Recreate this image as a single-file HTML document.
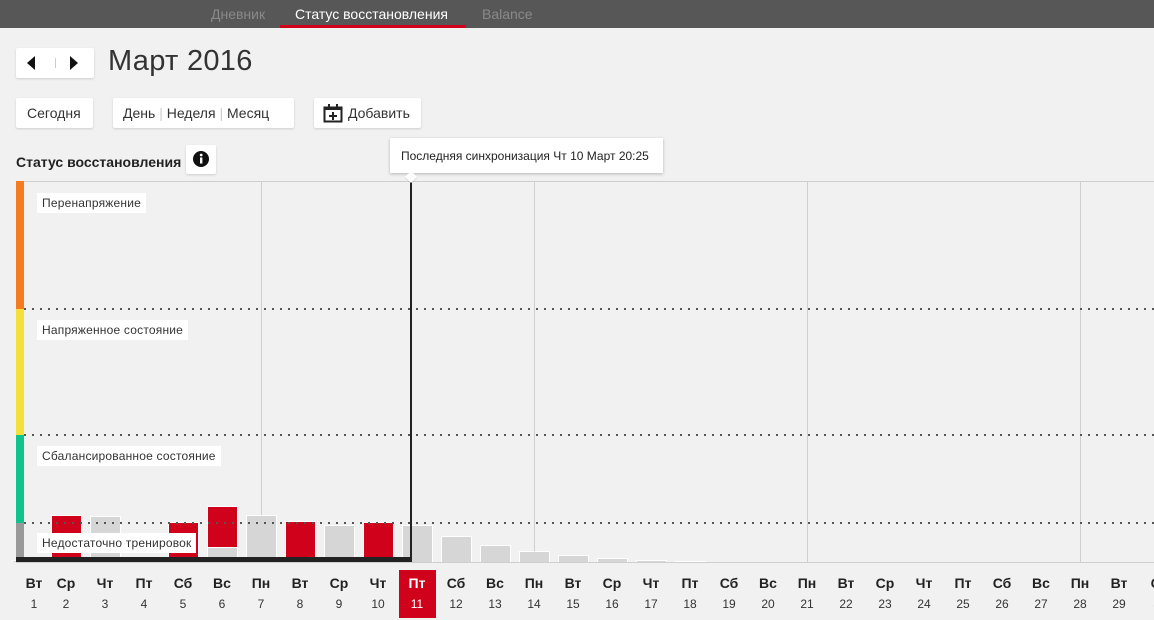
<!DOCTYPE html>
<html><head><meta charset="utf-8"><style>
*{margin:0;padding:0;box-sizing:border-box}
body{width:1154px;height:620px;background:#f1f1f1;font-family:"Liberation Sans",sans-serif;position:relative;overflow:hidden;color:#222}
.a{position:absolute}
.nav{left:0;top:0;width:1154px;height:28px;background:#575757}
.nav span{position:absolute;top:6px;font-size:14px;color:#8a8a8a}
.btn{position:absolute;background:#fff;box-shadow:0 1px 2px rgba(0,0,0,.15);border-radius:2px;font-size:14px;color:#333}
.lbl{position:absolute;background:#fff;font-size:12px;color:#333;padding:3px 5px;left:37px;letter-spacing:.2px}
.dot{position:absolute;left:24px;width:1130px;height:2px;background:repeating-linear-gradient(90deg,#555 0,#555 2px,transparent 2px,transparent 8px)}
.vl{position:absolute;top:181px;width:1px;height:381px;background:#cfcfcf}
.bar{position:absolute;width:31px;background:#d6d6d6;bottom:58px;border:1px solid #fff;border-bottom:none}
.r{background:#d0021b}
.d{position:absolute;width:38px;text-align:center;top:575px}
.d b{display:block;font-size:14px;height:22px;color:#222}
.d i{display:block;font-style:normal;font-size:12px;color:#333}
</style></head><body>
<div class="a nav"><span style="left:211px">Дневник</span><span style="left:295px;color:#fff">Статус восстановления</span><span style="left:482px">Balance</span><div class="a" style="left:280px;top:25px;width:186px;height:3px;background:#d0021b"></div></div>
<div class="btn" style="left:16px;top:48px;width:78px;height:30px"><svg class="a" style="left:0;top:0" width="78" height="30"><path d="M19 8 L11 15 L19 22Z" fill="#111"/><rect x="39" y="10" width="1" height="10" fill="#ccc"/><path d="M54 8 L62 15 L54 22Z" fill="#111"/></svg></div>
<div class="a" style="left:108px;top:45px;font-size:29px;color:#333;letter-spacing:.3px">Март 2016</div>
<div class="btn" style="left:16px;top:98px;width:77px;height:30px;padding:7px 0 0 11px">Сегодня</div>
<div class="btn" style="left:113px;top:98px;width:181px;height:30px;padding:7px 0 0 10px">День <span style="color:#ccc">|</span> Неделя <span style="color:#ccc">|</span> Месяц</div>
<div class="btn" style="left:314px;top:98px;width:107px;height:30px;padding:7px 0 0 34px"><svg class="a" style="left:9px;top:5px" width="21" height="20"><rect x="1.5" y="4.5" width="17" height="14" fill="none" stroke="#222" stroke-width="2"/><rect x="1" y="4" width="18" height="3" fill="#222"/><rect x="5" y="1" width="2" height="5" fill="#222"/><rect x="13" y="1" width="2" height="5" fill="#222"/><path d="M10 9v8M6 13h8" stroke="#222" stroke-width="2"/></svg>Добавить</div>
<div class="a" style="left:16px;top:154px;font-size:14px;font-weight:bold;color:#222">Статус восстановления</div>
<div class="btn" style="left:186px;top:145px;width:30px;height:29px"><svg class="a" style="left:6px;top:5px" width="18" height="18"><circle cx="9" cy="9" r="8" fill="#111"/><rect x="8" y="7.5" width="2.4" height="6" fill="#fff"/><circle cx="9.2" cy="5" r="1.4" fill="#fff"/></svg></div>
<div class="a" style="left:16px;top:181px;width:1138px;height:1px;background:#cfcfcf"></div>
<div class="a" style="left:16px;top:562px;width:1138px;height:1px;background:#cfcfcf"></div>
<div class="vl" style="left:261px"></div><div class="vl" style="left:534px"></div><div class="vl" style="left:807px"></div><div class="vl" style="left:1080px"></div>
<div class="a" style="left:16px;top:181px;width:8px;height:128px;background:#f47b20"></div>
<div class="a" style="left:16px;top:309px;width:8px;height:126px;background:#f4e03c"></div>
<div class="a" style="left:16px;top:435px;width:8px;height:88px;background:#10c38e"></div>
<div class="a" style="left:16px;top:523px;width:8px;height:38px;background:#999"></div>
<div class="dot" style="top:308px"></div><div class="dot" style="top:434px"></div>
<div class="lbl" style="top:193px">Перенапряжение</div>
<div class="lbl" style="top:320px">Напряженное состояние</div>
<div class="lbl" style="top:446px">Сбалансированное состояние</div>
<div class="bar" style="left:12px;height:2px"></div>
<div class="bar r" style="left:51px;height:47px"></div>
<div class="bar" style="left:90px;height:46px"></div>
<div class="bar" style="left:129px;height:2px"></div>
<div class="bar r" style="left:168px;height:40px"></div>
<div class="bar" style="left:207px;height:56px;background:linear-gradient(#d0021b 0,#d0021b 40px,#fff 40px,#fff 41px,#d6d6d6 41px)"></div>
<div class="bar" style="left:246px;height:47px"></div>
<div class="bar r" style="left:285px;height:41px"></div>
<div class="bar" style="left:324px;height:37px"></div>
<div class="bar r" style="left:363px;height:40px"></div>
<div class="bar" style="left:402px;height:37px"></div>
<div class="bar" style="left:441px;height:26px"></div>
<div class="bar" style="left:480px;height:17px"></div>
<div class="bar" style="left:519px;height:11px"></div>
<div class="bar" style="left:558px;height:7px"></div>
<div class="bar" style="left:597px;height:4px"></div>
<div class="bar" style="left:636px;height:2px"></div>
<div class="bar" style="left:675px;height:1px"></div>
<div class="dot" style="top:522px"></div>
<div class="lbl" style="top:533px">Недостаточно тренировок</div>
<div class="a" style="left:16px;top:557px;width:396px;height:5px;background:#222"></div>
<div class="a" style="left:410px;top:181px;width:2px;height:380px;background:#222"></div>
<div class="a" style="left:390px;top:138px;width:273px;height:35px;background:#fff;box-shadow:0 1px 3px rgba(0,0,0,.25);font-size:12px;color:#222;padding:11px 0 0 11px">Последняя синхронизация Чт 10 Март 20:25</div>
<div class="a" style="left:405px;top:171px;width:12px;height:12px;background:#fff;transform:rotate(45deg) scale(.7);box-shadow:1px 1px 1px rgba(0,0,0,.15)"></div>
<div class="a" style="left:399px;top:570px;width:37px;height:48px;background:#d0021b"></div>
<div class="d" style="left:15px"><b>Вт</b><i>1</i></div>
<div class="d" style="left:47px"><b>Ср</b><i>2</i></div>
<div class="d" style="left:86px"><b>Чт</b><i>3</i></div>
<div class="d" style="left:125px"><b>Пт</b><i>4</i></div>
<div class="d" style="left:164px"><b>Сб</b><i>5</i></div>
<div class="d" style="left:203px"><b>Вс</b><i>6</i></div>
<div class="d" style="left:242px"><b>Пн</b><i>7</i></div>
<div class="d" style="left:281px"><b>Вт</b><i>8</i></div>
<div class="d" style="left:320px"><b>Ср</b><i>9</i></div>
<div class="d" style="left:359px"><b>Чт</b><i>10</i></div>
<div class="d" style="left:398px"><b style="color:#fff">Пт</b><i style="color:#fff">11</i></div>
<div class="d" style="left:437px"><b>Сб</b><i>12</i></div>
<div class="d" style="left:476px"><b>Вс</b><i>13</i></div>
<div class="d" style="left:515px"><b>Пн</b><i>14</i></div>
<div class="d" style="left:554px"><b>Вт</b><i>15</i></div>
<div class="d" style="left:593px"><b>Ср</b><i>16</i></div>
<div class="d" style="left:632px"><b>Чт</b><i>17</i></div>
<div class="d" style="left:671px"><b>Пт</b><i>18</i></div>
<div class="d" style="left:710px"><b>Сб</b><i>19</i></div>
<div class="d" style="left:749px"><b>Вс</b><i>20</i></div>
<div class="d" style="left:788px"><b>Пн</b><i>21</i></div>
<div class="d" style="left:827px"><b>Вт</b><i>22</i></div>
<div class="d" style="left:866px"><b>Ср</b><i>23</i></div>
<div class="d" style="left:905px"><b>Чт</b><i>24</i></div>
<div class="d" style="left:944px"><b>Пт</b><i>25</i></div>
<div class="d" style="left:983px"><b>Сб</b><i>26</i></div>
<div class="d" style="left:1022px"><b>Вс</b><i>27</i></div>
<div class="d" style="left:1061px"><b>Пн</b><i>28</i></div>
<div class="d" style="left:1100px"><b>Вт</b><i>29</i></div>
<div class="d" style="left:1141px"><b>Ср</b><i>30</i></div>
</body></html>
